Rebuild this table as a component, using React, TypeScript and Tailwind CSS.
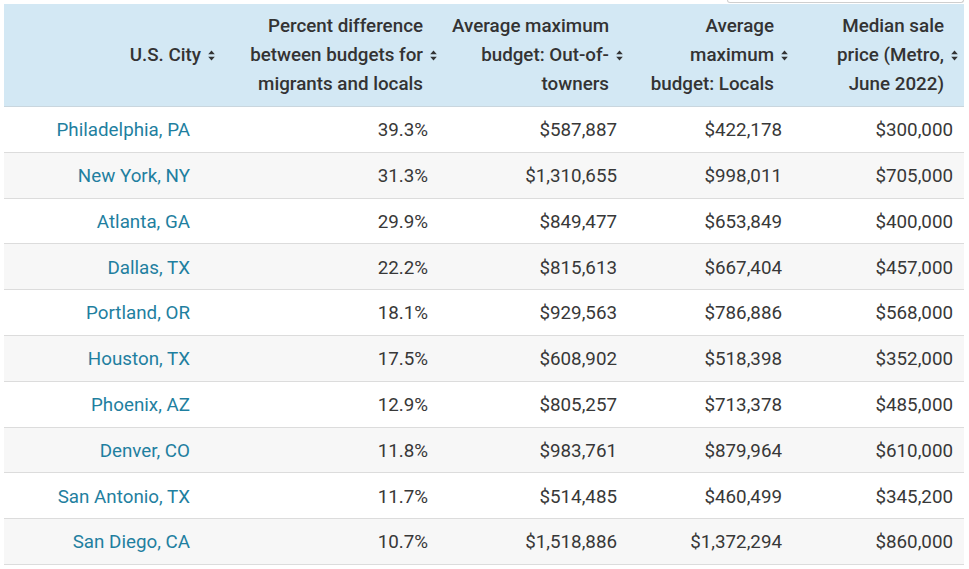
const rows = [
  ["Philadelphia, PA", "39.3%", "$587,887", "$422,178", "$300,000"],
  ["New York, NY", "31.3%", "$1,310,655", "$998,011", "$705,000"],
  ["Atlanta, GA", "29.9%", "$849,477", "$653,849", "$400,000"],
  ["Dallas, TX", "22.2%", "$815,613", "$667,404", "$457,000"],
  ["Portland, OR", "18.1%", "$929,563", "$786,886", "$568,000"],
  ["Houston, TX", "17.5%", "$608,902", "$518,398", "$352,000"],
  ["Phoenix, AZ", "12.9%", "$805,257", "$713,378", "$485,000"],
  ["Denver, CO", "11.8%", "$983,761", "$879,964", "$610,000"],
  ["San Antonio, TX", "11.7%", "$514,485", "$460,499", "$345,200"],
  ["San Diego, CA", "10.7%", "$1,518,886", "$1,372,294", "$860,000"],
];

const SortIcon = () => (
  <svg width="7" height="11" viewBox="0 0 7 11" className="ml-[7px] shrink-0">
    <path d="M3.5 0.5 L6.8 4.3 L0.2 4.3 Z" fill="#333" />
    <path d="M3.5 10.5 L6.8 6.7 L0.2 6.7 Z" fill="#333" />
  </svg>
);

const HeadCell = ({ lines, className }: { lines: string[]; className: string }) => (
  <div className={`flex items-center justify-end ${className}`}>
    <div className="text-right">
      {lines.map((l, i) => (
        <div key={i} className="whitespace-nowrap">{l}</div>
      ))}
    </div>
    <SortIcon />
  </div>
);

export default function App() {
  return (
    <div className="bg-white w-[969px] h-[569px] overflow-hidden px-[4px] font-['Roboto',sans-serif]">
      <div className="h-[4px] flex justify-end pr-[1px]">
        <div className="w-[237px] h-[3px] border-b border-x border-[#cfcfcf] rounded-b-[3px]" />
      </div>
      <div className="w-[960px]">
        <div className="grid grid-cols-[221px_220px_187px_163px_169px] h-[103px] bg-[#d3e8f4] border-b border-[#c9d6de] text-[18.8px] leading-[29px] font-medium text-[#333]">
          <HeadCell lines={["U.S. City"]} className="pr-[10px]" />
          <HeadCell lines={["Percent difference", "between budgets for", "migrants and locals"]} className="pr-[8px]" />
          <HeadCell lines={["Average maximum", "budget: Out-of-", "towners"]} className="pr-[9px]" />
          <HeadCell lines={["Average", "maximum", "budget: Locals"]} className="pr-[7px]" />
          <HeadCell lines={["Median sale", "price (Metro,", "June 2022)"]} className="pr-[6px]" />
        </div>
        {rows.map((r, i) => (
          <div
            key={r[0]}
            className={`grid grid-cols-[221px_220px_187px_163px_169px] h-[45.8px] items-center pt-[2px] border-b border-[#dcdcdc] text-[18.8px] text-[#383838] ${
              i % 2 === 1 ? "bg-[#f7f7f7]" : "bg-white"
            }`}
          >
            <div className="text-right pr-[35px] text-[#1f7fa0]">{r[0]}</div>
            <div className="text-right pr-[17px]">{r[1]}</div>
            <div className="text-right pr-[15px]">{r[2]}</div>
            <div className="text-right pr-[13px]">{r[3]}</div>
            <div className="text-right pr-[11px]">{r[4]}</div>
          </div>
        ))}
      </div>
    </div>
  );
}
